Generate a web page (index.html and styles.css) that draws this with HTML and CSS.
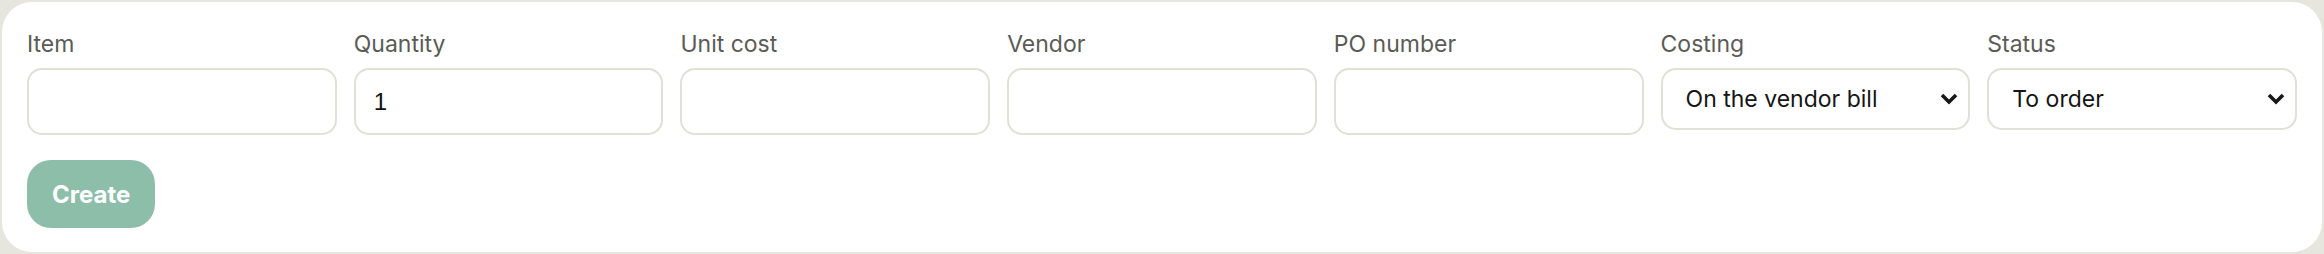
FILE: index.html
```html
<!DOCTYPE html>
<html lang="en">
<head>
  <meta charset="UTF-8">
  <meta name="viewport" content="width=device-width, initial-scale=1.0">
  <title>New purchase line</title>
  <link rel="stylesheet" href="styles.css">
</head>
<body>

  <!-- New line form -->
  <form class="line-card" onsubmit="return false">
    <div class="fields">
      <div class="field">
        <label for="item">Item</label>
        <input type="text" id="item">
      </div>
      <div class="field">
        <label for="qty">Quantity</label>
        <input type="text" id="qty" value="1">
      </div>
      <div class="field">
        <label for="unit-cost">Unit cost</label>
        <input type="text" id="unit-cost">
      </div>
      <div class="field">
        <label for="vendor">Vendor</label>
        <input type="text" id="vendor">
      </div>
      <div class="field">
        <label for="po">PO number</label>
        <input type="text" id="po">
      </div>
      <div class="field">
        <label for="costing">Costing</label>
        <select id="costing">
          <option>On the vendor bill</option>
          <option>Separately</option>
        </select>
      </div>
      <div class="field">
        <label for="status">Status</label>
        <select id="status">
          <option>To order</option>
          <option>Ordered</option>
          <option>Received</option>
        </select>
      </div>
    </div>
    <button class="create-btn" disabled>Create</button>
  </form>

</body>
</html>
```

FILE: styles.css
```css
body {
  margin: 0;
  background-color: #e6e6de;
  font-family: 'Inter', 'Lato', sans-serif;
}

.line-card {
  margin: 2px;
  padding: 27px 25px 24px;
  background-color: #ffffff;
  border-radius: 30px;
}

.fields {
  display: grid;
  grid-template-columns: repeat(7, minmax(0, 1fr));
  gap: 17px;
  align-items: start;
}

.field {
  display: flex;
  flex-direction: column;
  min-width: 0;
}

.field label {
  font-size: 23px;
  line-height: 30px;
  color: #5b5b56;
  margin-bottom: 9px;
}

.field input[type="text"],
.field select {
  box-sizing: border-box;
  width: 100%;
  border: 2px solid #e0e0d4;
  border-radius: 15px;
  background-color: #fff;
}

.field input[type="text"] {
  height: 67px;
  padding: 0 18px;
  font-family: 'Liberation Sans', Arial, sans-serif;
  font-size: 24px;
  color: #111;
}

.field select {
  height: 62px;
  padding: 0 40px 0 23px;
  background-image: url("data:image/svg+xml,%3Csvg xmlns='http://www.w3.org/2000/svg' width='18' height='12' viewBox='0 0 18 12'%3E%3Cpath d='M2 2l7 7 7-7' fill='none' stroke='%23181818' stroke-width='3.6'/%3E%3C/svg%3E");
  background-repeat: no-repeat;
  background-position: right 10px center;
  appearance: none;
  -webkit-appearance: none;
  font-family: 'Inter', 'Lato', sans-serif;
  font-size: 23px;
  color: #151515;
}

.create-btn {
  margin-top: 25px;
  height: 68px;
  padding: 0 25px;
  border: none;
  border-radius: 24px;
  background-color: #8dbea9;
  color: #fff;
  font-family: 'Inter', 'Lato', sans-serif;
  font-size: 24px;
  font-weight: 700;
}
```
